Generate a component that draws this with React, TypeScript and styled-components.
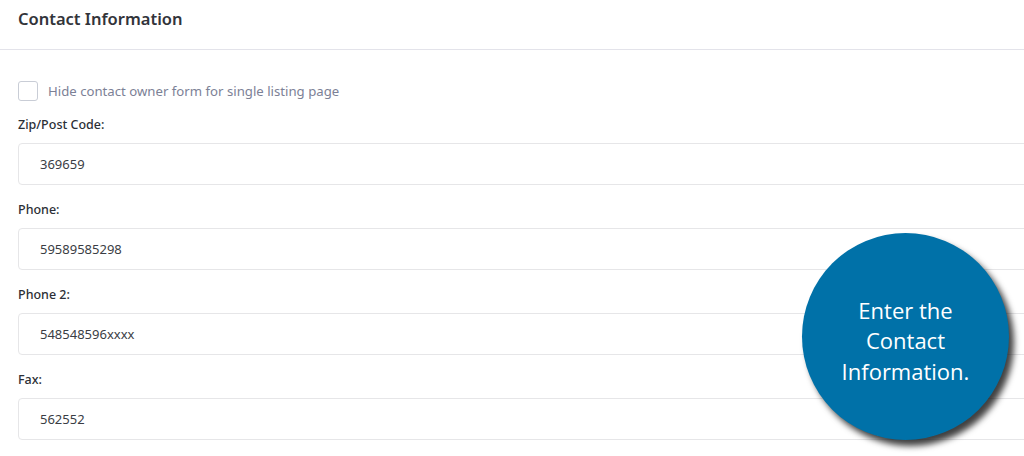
import React from 'react';
import styled, { createGlobalStyle } from 'styled-components';

const GlobalStyle = createGlobalStyle`
  html, body {
    margin: 0;
    padding: 0;
    background: #fff;
    overflow: hidden;
  }
  body {
    font-family: 'Noto Sans', 'Open Sans', sans-serif;
    color: #333;
  }
`;

const Page = styled.div`
  position: relative;
  width: 1024px;
  height: 456px;
  overflow: hidden;
  background: #fff;
`;

const Header = styled.header`
  height: 50px;
  padding: 0 18px;
  display: flex;
  align-items: center;
  border-bottom: 1px solid #e3e3ea;
  box-sizing: border-box;

  h2 {
    margin: 0 0 12px;
    font-size: 16.5px;
    font-weight: 600;
    color: #32343a;
  }
`;

const Body = styled.div`
  padding: 31px 0 0 18px;
`;

const CheckRow = styled.label`
  display: flex;
  align-items: center;
  gap: 10px;
  height: 20px;
  margin-bottom: 14px;
`;

const CheckBox = styled.span`
  width: 18px;
  height: 18px;
  border: 1px solid #c9cdd6;
  border-radius: 3px;
  background: #fff;
`;

const CheckLabel = styled.span`
  font-size: 13.2px;
  color: #7c8196;
`;

const Field = styled.div`
  display: flex;
  flex-direction: column;
  margin-bottom: 15px;
`;

const Label = styled.label`
  font-size: 12.5px;
  font-weight: 500;
  color: #2c2f36;
  line-height: 20px;
  margin-bottom: 8px;
`;

const Input = styled.div`
  height: 42px;
  width: 1030px;
  box-sizing: border-box;
  border: 1px solid #e6e6e8;
  border-radius: 4px;
  padding: 0 21px;
  display: flex;
  align-items: center;
  font-size: 13px;
  color: #3a3d44;
`;

const Callout = styled.div`
  position: absolute;
  left: 802px;
  top: 233px;
  width: 207px;
  height: 207px;
  border-radius: 50%;
  background: #0071a8;
  box-shadow: 5px 6px 6px rgba(0, 0, 0, 0.75);
  display: flex;
  align-items: center;
  justify-content: center;
  text-align: center;
  color: #fff;
  font-family: 'Open Sans', 'Noto Sans', sans-serif;
  font-size: 22px;
  line-height: 30.5px;
  padding-top: 8px;
  box-sizing: border-box;
`;

const fields = [
  { label: 'Zip/Post Code:', value: '369659' },
  { label: 'Phone:', value: '59589585298' },
  { label: 'Phone 2:', value: '548548596xxxx' },
  { label: 'Fax:', value: '562552' },
];

export default function App() {
  return (
    <Page>
      <GlobalStyle />
      <Header>
        <h2>Contact Information</h2>
      </Header>
      <Body>
        <CheckRow>
          <CheckBox />
          <CheckLabel>Hide contact owner form for single listing page</CheckLabel>
        </CheckRow>
        {fields.map((f) => (
          <Field key={f.label}>
            <Label>{f.label}</Label>
            <Input>{f.value}</Input>
          </Field>
        ))}
      </Body>
      <Callout>
        Enter the
        <br />
        Contact
        <br />
        Information.
      </Callout>
    </Page>
  );
}
